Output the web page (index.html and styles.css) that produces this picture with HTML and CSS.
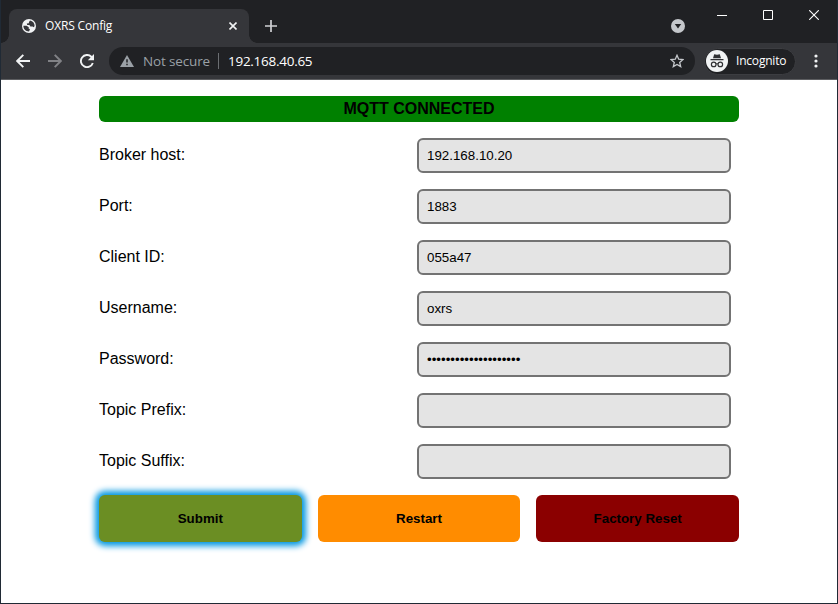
FILE: index.html
```html
<!DOCTYPE html>
<html lang="en">
<head>
<meta charset="utf-8">
<title>OXRS Config</title>
<link rel="stylesheet" href="styles.css">
</head>
<body>
<div class="window">
  <header class="tabstrip">
    <div class="tab">
      <svg class="globe" width="14" height="14" viewBox="0 0 14 14"><circle cx="7" cy="7" r="7" fill="#f1f3f4"/><path d="M1.400 6.800H4.600L6.800 8.200 6.600 9.600 8 10.200 7 12.500C3.700 12.500 1.300 10 1.400 6.800ZM8 1.500C10.800 1.900 12.600 4.200 12.600 7L11.800 8.200 10.600 7.400H8.400L7.400 6H5.200L4.800 4.600 6.800 4.300 7 2.900Z" fill="#35363a"/></svg>
      <span class="tab-title">OXRS Config</span>
      <svg class="tab-close" width="8" height="8" viewBox="0 0 8 8"><path d="M.5.5l7 7M7.500.5l-7 7" stroke="#f1f3f4" stroke-width="1.600"/></svg>
    </div>
    <svg class="new-tab" width="12" height="12" viewBox="0 0 12 12"><path d="M6 0v12M0 6h12" stroke="#d0d1d4" stroke-width="1.700"/></svg>
    <svg class="tab-search" width="14" height="14" viewBox="0 0 14 14"><circle cx="7" cy="7" r="7" fill="#c4c7cb"/><path d="M3.800 5h6.400L7 9.400z" fill="#202124"/></svg>
    <div class="controls">
      <svg width="10" height="10" viewBox="0 0 10 10"><path d="M0 5.500h10" stroke="#fff"/></svg>
      <svg width="10" height="10" viewBox="0 0 10 10"><path d="M.5.5h9v9h-9z" fill="none" stroke="#fff"/></svg>
      <svg width="10" height="10" viewBox="0 0 10 10"><path d="M.2.2l9.600 9.600M9.800.2L.2 9.800" stroke="#fff" stroke-width="1.100"/></svg>
    </div>
  </header>
  <nav class="toolbar">
    <svg class="nav-icon" width="14" height="14" viewBox="0 0 14 14"><path d="M14 7H1.500M7.300.8L1.200 7l6.100 6.200" fill="none" stroke="#f1f3f4" stroke-width="1.900"/></svg>
    <svg class="nav-icon" width="14" height="14" viewBox="0 0 14 14"><path d="M0 7h12.500M6.700.8L12.800 7l-6.100 6.200" fill="none" stroke="#818286" stroke-width="1.900"/></svg>
    <svg class="nav-icon reload" width="14" height="14" viewBox="0 0 14 14"><path d="M12.800 9A6.100 6.100 0 1 1 11.300 2.700L12.300 3.700" fill="none" stroke="#f1f3f4" stroke-width="1.900"/><path d="M14 0v6.200H7.800z" fill="#f1f3f4"/></svg>
    <div class="address">
      <svg class="warning" width="14" height="12" viewBox="0 0 14 12"><path d="M7 0l7 12H0z" fill="#9aa0a6"/><path d="M7 4.200v3.400M7 8.700v1.600" stroke="#202124" stroke-width="1.500"/></svg>
      <span class="insecure">Not secure</span>
      <span class="divider"></span>
      <span class="url">192.168.40.65</span>
      <svg class="star" width="14" height="14" viewBox="0 0 14 14"><path d="M7 1.300l1.700 3.900 4.200.4-3.200 2.800 1 4.200L7 10.400l-3.700 2.200 1-4.200-3.200-2.800 4.200-.4z" fill="none" stroke="#c4c7cb" stroke-width="1.300"/></svg>
    </div>
    <div class="incognito">
      <svg width="22" height="22" viewBox="0 0 22 22"><circle cx="11" cy="11" r="11" fill="#f1f3f4"/><path d="M8.200 4.200l2.800.6 2.800-.6L15 8.200H7zM4.500 9h13v1.200h-13z" fill="#303134"/><g fill="none" stroke="#303134" stroke-width="1.200"><circle cx="7.700" cy="14.400" r="2.300"/><circle cx="14.300" cy="14.400" r="2.300"/><path d="M10 14.100q1-.7 2 0"/></g></svg>
      <span>Incognito</span>
    </div>
    <svg class="menu" width="4" height="14" viewBox="0 0 4 14"><g fill="#f1f3f4"><circle cx="2" cy="2" r="1.600"/><circle cx="2" cy="7" r="1.600"/><circle cx="2" cy="12" r="1.600"/></g></svg>
  </nav>
  <main class="page">
    <div class="status">MQTT CONNECTED</div>
    <form class="config">
      <div class="row"><label>Broker host:</label><div class="field">192.168.10.20</div></div>
      <div class="row"><label>Port:</label><div class="field">1883</div></div>
      <div class="row"><label>Client ID:</label><div class="field">055a47</div></div>
      <div class="row"><label>Username:</label><div class="field">oxrs</div></div>
      <div class="row"><label>Password:</label><div class="field">••••••••••••••••••••</div></div>
      <div class="row"><label>Topic Prefix:</label><div class="field"></div></div>
      <div class="row"><label>Topic Suffix:</label><div class="field"></div></div>
      <div class="actions">
        <button type="button" class="submit">Submit</button>
        <button type="button" class="restart">Restart</button>
        <button type="button" class="reset">Factory Reset</button>
      </div>
    </form>
  </main>
</div>
</body>
</html>
```
FILE: styles.css
```css
* { box-sizing: border-box; }
body { margin: 0; background: #fff; }
svg { display: block; flex: none; }

.window {
  display: flex;
  flex-direction: column;
  width: 838px;
  height: 604px;
  border: 1px solid #202a35;
  border-top: 0;
  overflow: hidden;
  font: 12px/16px "Open Sans", "Noto Sans", sans-serif;
}

.tabstrip {
  display: flex;
  height: 43px;
  padding-left: 8px;
  background: #202124;
}
.tab {
  position: relative;
  display: flex;
  align-items: center;
  width: 240px;
  height: 34px;
  margin-top: 9px;
  padding: 0 12px 0 13px;
  border-radius: 8px 8px 0 0;
  background: #35363a;
}
.tab::before, .tab::after {
  content: "";
  position: absolute;
  bottom: 0;
  width: 8px;
  height: 8px;
}
.tab::before { left: -8px; background: radial-gradient(circle at 0 0, transparent 7.5px, #35363a 8px); }
.tab::after { right: -8px; background: radial-gradient(circle at 100% 0, transparent 7.5px, #35363a 8px); }
.tab-title { margin-left: 9px; color: #fff; letter-spacing: -0.17px; white-space: nowrap; }
.tab-close { margin-left: auto; }
.new-tab { margin: 20px 0 0 16px; }
.tab-search { margin: 19px 0 0 auto; }
.controls { display: flex; gap: 36px; margin: 10px 18px 0 32px; }

.toolbar {
  display: flex;
  align-items: center;
  height: 37px;
  padding-left: 15px;
  border-bottom: 1px solid #5d5e61;
  background: #35363a;
}
.nav-icon { margin-right: 18px; }
.reload { margin-right: 15px; }
.address {
  display: flex;
  align-items: center;
  width: 586px;
  height: 28px;
  padding: 0 11px;
  border-radius: 14px;
  background: #202124;
  font-size: 13.5px;
}
.insecure { width: 75px; margin-left: 9px; color: #9aa0a6; letter-spacing: -0.15px; white-space: nowrap; }
.divider { width: 1px; height: 16px; background: #6b6e72; }
.url { margin-left: 9px; color: #fff; letter-spacing: -0.27px; }
.star { margin-left: auto; }
.incognito {
  display: flex;
  align-items: center;
  width: 92px;
  height: 27px;
  margin-left: 9px;
  padding-left: 1px;
  border: 1px solid #3c3d41;
  border-radius: 14px;
  background: #202124;
  color: #fff;
}
.incognito span { margin-left: 8px; letter-spacing: -0.2px; }
.menu { margin-left: 18px; }

.page {
  flex: 1;
  width: 640px;
  margin-left: 98px;
  padding-top: 16px;
  color: #000;
  font: 16px/18px "Liberation Sans", Arial, sans-serif;
}
.status {
  height: 26px;
  border-radius: 6px;
  background: #008000;
  font-weight: bold;
  line-height: 25px;
  text-align: center;
}
.config { margin: 16px 0 0; }
.row { display: flex; height: 35px; margin-bottom: 16px; }
.row label { width: 318px; line-height: 34px; }
.field {
  width: 314px;
  padding: 0 8px;
  border: 2px solid #737373;
  border-radius: 6px;
  background: #e4e4e4;
  font-size: 13.333px;
  line-height: 31px;
}
.actions { display: grid; grid-template-columns: repeat(3, 1fr); gap: 16px; }
button {
  height: 47px;
  padding: 0;
  border: 0;
  border-radius: 6px;
  color: #000;
  font: bold 13.333px "Liberation Sans", Arial, sans-serif;
}
.submit { background: #6b8e23; box-shadow: 0 0 6px 4px #0096e0; }
.restart { background: #ff8c00; }
.reset { background: #8b0000; }
```
